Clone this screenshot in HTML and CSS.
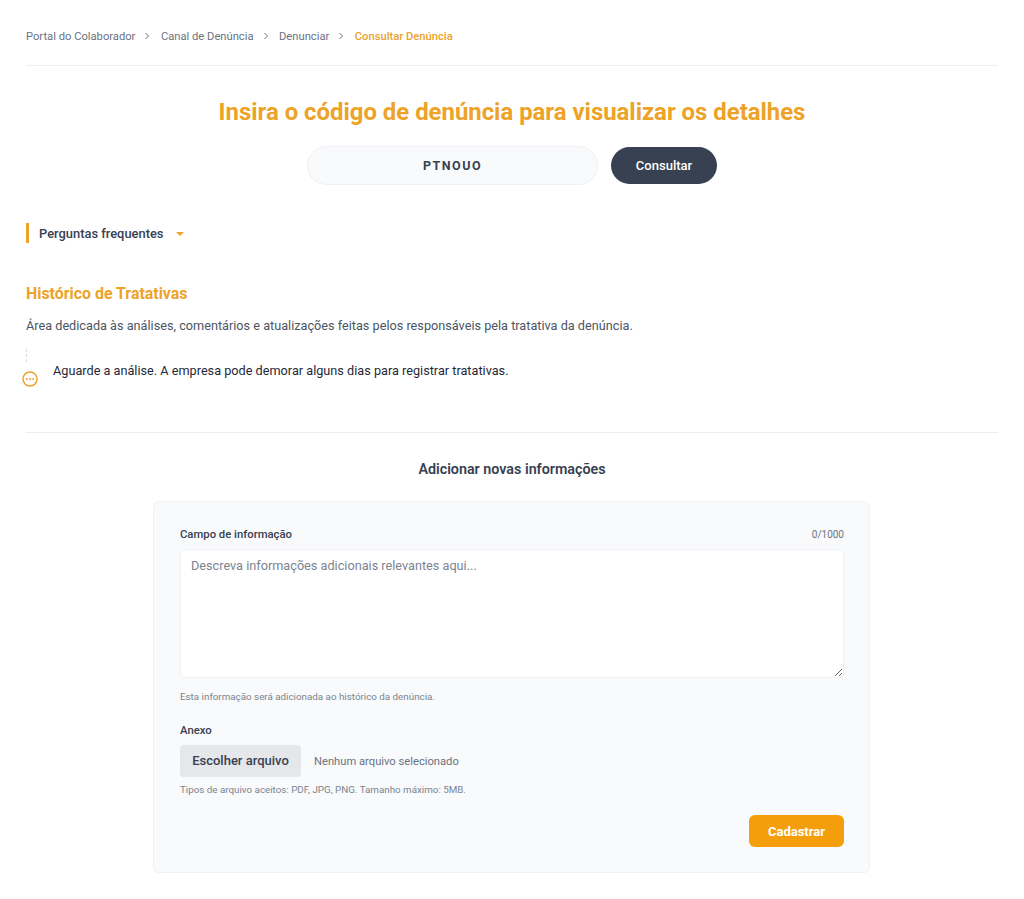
FILE: index.html
```html
<!DOCTYPE html>
<html lang="pt-BR">
<head>
    <meta charset="UTF-8">
    <meta name="viewport" content="width=device-width, initial-scale=1.0">
    <title>Consultar Denúncia</title>
    <link rel="stylesheet" href="styles.css">
</head>
<body>

<div class="page">
    <nav class="breadcrumb">
        <a>Portal do Colaborador</a>
        <svg class="crumb-sep" viewBox="0 0 6 8"><path d="M1.5 1l3 3-3 3"/></svg>
        <a>Canal de Denúncia</a>
        <svg class="crumb-sep" viewBox="0 0 6 8"><path d="M1.5 1l3 3-3 3"/></svg>
        <a>Denunciar</a>
        <svg class="crumb-sep" viewBox="0 0 6 8"><path d="M1.5 1l3 3-3 3"/></svg>
        <a class="current">Consultar Denúncia</a>
    </nav>

    <h1>Insira o código de denúncia para visualizar os detalhes</h1>

    <div class="search">
        <input class="code-input" type="text" value="PTNOUO">
        <button class="btn-dark">Consultar</button>
    </div>

    <div class="faq">
        <span>Perguntas frequentes</span>
        <i class="caret"></i>
    </div>

    <h2>Histórico de Tratativas</h2>
    <p class="intro">Área dedicada às análises, comentários e atualizações feitas pelos responsáveis pela tratativa da denúncia.</p>

    <div class="timeline">
        <div class="timeline-mark">
            <div class="timeline-line"></div>
            <svg class="timeline-icon" viewBox="0 0 16 16">
                <circle cx="8" cy="8" r="7"/>
                <circle class="dot" cx="4.8" cy="8" r="1"/>
                <circle class="dot" cx="8" cy="8" r="1"/>
                <circle class="dot" cx="11.2" cy="8" r="1"/>
            </svg>
        </div>
        <p>Aguarde a análise. A empresa pode demorar alguns dias para registrar tratativas.</p>
    </div>

    <hr class="divider">

    <h3>Adicionar novas informações</h3>

    <form class="card">
        <div class="field-head">
            <label for="info">Campo de informação</label>
            <span class="counter">0/1000</span>
        </div>
        <textarea id="info" placeholder="Descreva informações adicionais relevantes aqui..."></textarea>
        <p class="hint">Esta informação será adicionada ao histórico da denúncia.</p>

        <label class="attach-label">Anexo</label>
        <div class="file-row">
            <span class="file-btn">Escolher arquivo</span>
            <span class="file-name">Nenhum arquivo selecionado</span>
        </div>
        <p class="hint file-hint">Tipos de arquivo aceitos: PDF, JPG, PNG. Tamanho máximo: 5MB.</p>

        <div class="actions">
            <button type="button" class="btn-primary">Cadastrar</button>
        </div>
    </form>
</div>

</body>
</html>
```

FILE: styles.css
```css
* {
    box-sizing: border-box;
}
body {
    font-family: Roboto, 'Liberation Sans', sans-serif;
    background-color: #fff;
    margin: 0;
    color: #374151;
}
.page {
    padding: 0 26px;
}
.breadcrumb {
    display: flex;
    align-items: center;
    height: 66px;
    padding-top: 8px;
    border-bottom: 1px solid #eceef1;
    font-size: 11.2px;
    color: #6b7280;
}
.crumb-sep {
    width: 6px;
    height: 8px;
    margin: -2px 10.5px 0 9px;
    fill: none;
    stroke: #6b7280;
    stroke-width: 1;
}
.current {
    color: #e9a32c;
    font-weight: 500;
}
h1 {
    margin: 31px 0 0;
    font-size: 23.9px;
    line-height: 30px;
    font-weight: 700;
    color: #eda228;
    text-align: center;
}
.search {
    display: flex;
    justify-content: center;
    align-items: center;
    gap: 13px;
    margin-top: 19px;
}
.code-input {
    width: 291px;
    height: 39px;
    border: 1px solid #eef0f3;
    border-radius: 20px;
    background-color: #f9fafb;
    text-align: center;
    font-family: inherit;
    font-size: 12.5px;
    font-weight: 700;
    letter-spacing: 1.5px;
    color: #374151;
    outline: none;
}
.btn-dark {
    width: 106px;
    height: 37px;
    border: none;
    border-radius: 19px;
    background-color: #374151;
    color: #fff;
    font-family: inherit;
    font-size: 13px;
    font-weight: 500;
}
.faq {
    display: flex;
    align-items: center;
    height: 20px;
    margin-top: 38px;
    padding-left: 10px;
    border-left: 3px solid #eda228;
    font-size: 12.9px;
    font-weight: 500;
}
.caret {
    width: 0;
    height: 0;
    margin: 2px 0 0 12px;
    border-left: 4px solid transparent;
    border-right: 4px solid transparent;
    border-top: 4px solid #eda228;
}
h2 {
    margin: 41px 0 0;
    font-size: 15.9px;
    line-height: 20px;
    font-weight: 700;
    color: #eda228;
}
.intro {
    margin: 13px 0 0;
    font-size: 12.7px;
    line-height: 18px;
    color: #4b5563;
}
.timeline {
    display: flex;
    margin-top: 14px;
    font-size: 12.7px;
    color: #1f2937;
}
.timeline p {
    margin: 13px 0 0 15px;
    line-height: 18px;
}
.timeline-mark {
    display: flex;
    flex-direction: column;
    width: 16px;
    margin-left: -4px;
}
.timeline-line {
    height: 13px;
    margin-left: 4px;
    border-left: 1px dashed #d8dbe0;
}
.timeline-icon {
    flex: none;
    width: 16px;
    height: 16px;
    margin-top: 9px;
    fill: none;
    stroke: #eda228;
    stroke-width: 1.5;
}
.timeline-icon .dot {
    fill: #eda228;
    stroke: none;
}
.divider {
    margin: 45px 0 0;
    border: none;
    border-top: 1px solid #eceef1;
}
h3 {
    margin: 26px 0 0;
    font-size: 14.3px;
    line-height: 20px;
    font-weight: 600;
    text-align: center;
}
.card {
    width: 717px;
    margin: 22px 0 0 127px;
    padding: 23px 25px 25px 26px;
    background-color: #f8fafc;
    border: 1px solid #f0f2f4;
    border-radius: 6px;
}
.field-head {
    display: flex;
    justify-content: space-between;
    align-items: center;
    height: 18px;
}
label {
    font-size: 11.3px;
    font-weight: 500;
    color: #374151;
}
.counter {
    font-size: 10px;
    color: #6b7280;
}
textarea {
    display: block;
    width: 100%;
    height: 129px;
    margin-top: 6px;
    padding: 7px 10px;
    border: 1px solid #eef0f3;
    border-radius: 4px;
    background-color: #fff;
    font-family: inherit;
    font-size: 12.7px;
    line-height: 18px;
    outline: none;
}
textarea::placeholder {
    color: #7b8490;
}
.hint {
    margin: 13px 0 0;
    font-size: 9.8px;
    line-height: 12px;
    color: #7b8490;
}
.attach-label {
    display: block;
    margin-top: 21px;
    line-height: 14px;
}
.file-row {
    display: flex;
    align-items: center;
    margin-top: 7px;
}
.file-btn {
    display: flex;
    align-items: center;
    justify-content: center;
    width: 121px;
    height: 32px;
    padding-bottom: 2px;
    border-radius: 4px;
    background-color: #e5e7eb;
    font-size: 13px;
    font-weight: 500;
    color: #374151;
}
.file-name {
    margin-left: 13px;
    font-size: 11.2px;
    color: #6b7280;
}
.file-hint {
    margin-top: 7px;
}
.actions {
    display: flex;
    justify-content: flex-end;
    margin-top: 19px;
}
.btn-primary {
    width: 95px;
    height: 32px;
    border: none;
    border-radius: 6px;
    background-color: #f59e0b;
    color: #fff;
    font-family: inherit;
    font-size: 13px;
    font-weight: 700;
}
```
